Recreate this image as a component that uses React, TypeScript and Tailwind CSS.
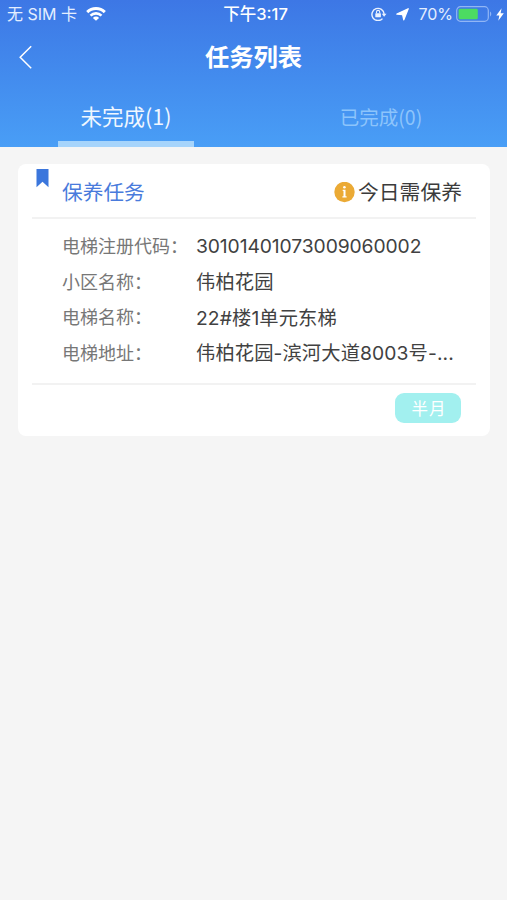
import { clsx } from 'clsx'

interface Field {
  label: string
  value: string
  code?: boolean
}

const tabs = [
  { title: '未完成(1)', active: true },
  { title: '已完成(0)', active: false },
]

const fields: Field[] = [
  { label: '电梯注册代码：', value: '30101401073009060002', code: true },
  { label: '小区名称：', value: '伟柏花园' },
  { label: '电梯名称：', value: '22#楼1单元东梯' },
  { label: '电梯地址：', value: '伟柏花园-滨河大道8003号-...' },
]

const StatusBar = () => (
  <div className="grid h-7 grid-cols-[1fr_auto_1fr] items-center pl-[7px] pr-[3px] text-[16px] leading-7 text-[#e4eeff]">
    <div className="flex items-center gap-[9px]">
      <span className="whitespace-nowrap">无 SIM 卡</span>
      <svg width="20" height="14" viewBox="0 0 20 14" fill="none" stroke="#fff">
        <path d="M1.2 5.1a12.6 12.6 0 0 1 17.6 0" strokeWidth="3" />
        <path d="M4.5 8.6a7.9 7.9 0 0 1 11 0" strokeWidth="2.6" />
        <path d="M10 13.8 6.9 10.9a4.3 4.3 0 0 1 6.2 0z" fill="#fff" stroke="none" />
      </svg>
    </div>
    <span className="text-[16.5px] font-medium text-white">下午3:17</span>
    <div className="flex items-center justify-end">
      <svg width="16" height="14" viewBox="0 0 16 14" fill="none" stroke="#e9f1ff">
        <path d="M11.5 11.6A6.1 6.1 0 1 1 13.1 7" strokeWidth="1.4" />
        <path d="M10.8 6.7h4.7L13.1 9.8z" fill="#e9f1ff" stroke="none" />
        <rect x="4.3" y="6.2" width="5.6" height="4.1" rx=".5" fill="#e9f1ff" stroke="none" />
        <path d="M5.5 6.3V5a1.6 1.6 0 0 1 3.2 0v1.3" strokeWidth="1.1" />
      </svg>
      <svg className="ml-[9px]" width="13" height="13" viewBox="0 0 13 13" fill="#fff" stroke="#fff" strokeLinejoin="round">
        <path d="M12.2.8 7.8 11.8 6.6 6.6.9 6.1z" strokeWidth="1.3" />
      </svg>
      <span className="ml-[9px] text-[16px]">70%</span>
      <svg className="ml-[3px]" width="37" height="16" viewBox="0 0 37 16" fill="none">
        <rect x=".7" y=".7" width="31.6" height="14.6" rx="3.8" stroke="#91b6f5" strokeWidth="1.2" />
        <rect x="2.6" y="2.7" width="19.2" height="10.6" rx="1.4" fill="#4cdb62" />
        <path d="M34 5.6c1.7.7 1.7 4.1 0 4.8z" fill="#91b6f5" />
      </svg>
      <svg className="ml-[3px]" width="8" height="13" viewBox="0 0 8 13" fill="#fff">
        <path d="M5.6.3.3 7.4h3L2.3 12.7 7.8 5.3H4.6z" />
      </svg>
    </div>
  </div>
)

const Header = () => (
  <header className="h-[147px] bg-linear-to-b from-[#3d77e5] to-[#499ef6]">
    <StatusBar />
    <div className="grid h-[58px] grid-cols-[1fr_auto_1fr] items-center px-[18px]">
      <button type="button" className="w-4">
        <svg width="16" height="24" viewBox="0 0 16 24" fill="none" stroke="#fff" strokeWidth="1.5">
          <path d="M13.2 1.2 2.2 12.2l11 11" />
        </svg>
      </button>
      <h1 className="text-[24.3px] leading-none font-bold text-white">任务列表</h1>
    </div>
    <nav className="flex h-[61px] font-['Noto_Sans_CJK_SC',sans-serif]">
      {tabs.map((tab) => (
        <button
          key={tab.title}
          type="button"
          className={clsx(
            'flex flex-1 flex-col items-center justify-end',
            tab.active ? 'text-[21.5px] text-[#f0f7ff]' : 'pl-[3px] text-[19.5px] text-[#8dc4fb]',
          )}
        >
          <span className="flex h-[49px] items-center">{tab.title}</span>
          <span className={clsx('h-[6px] w-[136px]', tab.active && 'bg-[#a6d4fb]')} />
        </button>
      ))}
    </nav>
  </header>
)

const TaskCard = () => (
  <section className="mt-[17px] mr-[17px] ml-[18px] h-[272px] rounded-[8px] bg-white px-[14px]">
    <div className="flex h-[55px] items-center border-b-2 border-[#f2f2f2] pr-[14px]">
      <svg className="mt-[5px] ml-[4px] self-start" width="13" height="19" viewBox="0 0 13 19">
        <path d="M.5 0h12v18.2L6.5 12.8.5 18.2z" fill="#3b76dc" />
      </svg>
      <h2 className="mt-[4px] ml-[13px] text-[20.7px] text-[#497bdc]">保养任务</h2>
      <div className="mt-[4px] ml-auto flex items-center gap-[3px] text-[20.8px] text-[#3b3b3b]">
        <svg width="21" height="21" viewBox="0 0 21 21" fill="#fff">
          <circle cx="10.5" cy="10" r="10.2" fill="#ebaa35" />
          <circle cx="10.4" cy="5.2" r="1.3" />
          <path d="M8.7 7.8h2.8v6.5h1.1v1.3H8.4v-1.3h1.1V9.1h-.8z" />
        </svg>
        <span>今日需保养</span>
      </div>
    </div>
    <dl className="h-[166px] border-b-2 border-[#f2f2f2] pt-[10px] pl-[30px]">
      {fields.map((field) => (
        <div key={field.label} className="flex h-[35.6px] items-center">
          <dt className="w-[134px] shrink-0 text-[18px] text-[#777]">{field.label}</dt>
          <dd
            className={clsx(
              'text-[19.3px] whitespace-nowrap text-[#414141]',
              field.code ? 'tracking-[-0.1px]' : 'tracking-[0.1px]',
            )}
          >
            {field.value}
          </dd>
        </div>
      ))}
    </dl>
    <div className="flex justify-end pt-[8px] pr-[15px]">
      <span className="flex h-[30px] w-[66px] items-center justify-center rounded-[9px] bg-[#a2f0ef] pt-[2px] pl-[2px] text-[16.5px] tracking-[1px] text-white">
        半月
      </span>
    </div>
  </section>
)

export default function App() {
  return (
    <div className="flow-root h-[900px] w-[507px] overflow-hidden bg-[#f5f5f5] font-[Inter,'Noto_Sans_CJK_SC',sans-serif]">
      <Header />
      <TaskCard />
    </div>
  )
}
